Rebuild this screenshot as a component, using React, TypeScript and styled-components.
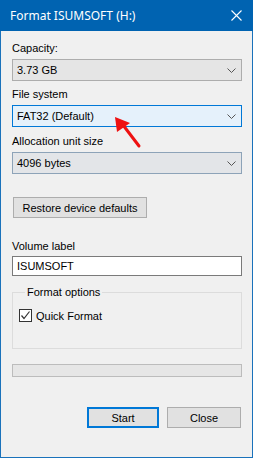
import styled, { createGlobalStyle } from 'styled-components';

const GlobalStyle = createGlobalStyle`
  html, body {
    margin: 0;
    padding: 0;
    background: #f0f0f0;
  }
  * {
    box-sizing: border-box;
  }
`;

const Window = styled.div`
  position: relative;
  width: 253px;
  height: 458px;
  border: 1px solid #1a72bb;
  border-top: none;
  background: #f0f0f0;
  font-family: 'Liberation Sans', Arial, sans-serif;
  font-size: 11px;
  color: #000;
  display: flex;
  flex-direction: column;
`;

const TitleBar = styled.div`
  height: 31px;
  margin: 0 -1px;
  background: #0063b1;
  color: #fff;
  display: flex;
  align-items: center;
  justify-content: space-between;
  padding: 0 11px 1px 10px;
  font-family: 'Noto Sans', 'Open Sans', sans-serif;
  font-size: 12px;
`;

const Body = styled.div`
  flex: 1;
  display: flex;
  flex-direction: column;
  padding: 11px 10px 0 11px;
`;

const Label = styled.div<{ $gap?: number }>`
  line-height: 13px;
  height: 13px;
  margin-top: ${({ $gap }) => $gap ?? 0}px;
  margin-bottom: 4px;
  white-space: nowrap;
`;

const Combo = styled.div<{ $focused?: boolean; $hover?: boolean }>`
  height: 22px;
  display: flex;
  align-items: center;
  justify-content: space-between;
  padding: 0 5px 0 4px;
  border: 1px solid
    ${({ $focused, $hover }) => ($focused ? '#0078d7' : $hover ? '#8da3b8' : '#adadad')};
  background: ${({ $focused, $hover }) => ($focused ? '#e5f1fb' : $hover ? '#e3e5e8' : '#e5e5e5')};
`;

const Chevron = () => (
  <svg width="9" height="5" viewBox="0 0 9 5">
    <polyline points="0.5,0.5 4.5,4.5 8.5,0.5" fill="none" stroke="#555" strokeWidth="1" />
  </svg>
);

const Button = styled.div<{ $primary?: boolean; $width: number }>`
  width: ${({ $width }) => $width}px;
  height: 21px;
  display: flex;
  align-items: center;
  justify-content: center;
  background: #e1e1e1;
  border: ${({ $primary }) => ($primary ? '2px solid #0078d7' : '1px solid #adadad')};
  white-space: nowrap;
`;

const RestoreRow = styled.div`
  margin-top: 23px;
  display: flex;
  padding-left: 1px;
`;

const TextInput = styled.div`
  height: 20px;
  display: flex;
  align-items: center;
  padding-left: 4px;
  margin-top: -1px;
  background: #fff;
  border: 1px solid #7a7a7a;
`;

const Group = styled.fieldset`
  margin: 10px 0 0;
  height: 63px;
  border: 1px solid #dcdcdc;
  padding: 8px 0 0 6px;
  min-width: 0;
`;

const Legend = styled.legend`
  margin-left: 6px;
  padding: 0 2px;
  line-height: 13px;
`;

const CheckRow = styled.div`
  display: flex;
  align-items: center;
  gap: 4px;
  margin-top: 2px;
`;

const CheckBox = styled.div`
  width: 13px;
  height: 13px;
  border: 1px solid #333;
  background: #fff;
  display: flex;
  align-items: center;
  justify-content: center;
`;

const Progress = styled.div`
  margin-top: 15px;
  height: 13px;
  border: 1px solid #bcbcbc;
  background: #e6e6e6;
`;

const ButtonRow = styled.div`
  margin-top: 30px;
  display: flex;
  justify-content: flex-end;
  gap: 8px;
  padding-right: 1px;
`;

const Pointer = styled.svg`
  position: absolute;
  left: 105px;
  top: 110px;
`;

export default function App() {
  return (
    <>
      <GlobalStyle />
      <Window>
        <TitleBar>
          <span>Format ISUMSOFT (H:)</span>
          <svg width="11" height="11" viewBox="0 0 11 11">
            <path d="M0.5 0.5 L10.5 10.5 M10.5 0.5 L0.5 10.5" stroke="#fff" strokeWidth="1.1" />
          </svg>
        </TitleBar>
        <Body>
          <Label>Capacity:</Label>
          <Combo>
            <span>3.73 GB</span>
            <Chevron />
          </Combo>
          <Label $gap={7}>File system</Label>
          <Combo $focused>
            <span>FAT32 (Default)</span>
            <Chevron />
          </Combo>
          <Label $gap={8}>Allocation unit size</Label>
          <Combo $hover>
            <span>4096 bytes</span>
            <Chevron />
          </Combo>
          <RestoreRow>
            <Button $width={134}>Restore device defaults</Button>
          </RestoreRow>
          <Label $gap={22}>Volume label</Label>
          <TextInput>ISUMSOFT</TextInput>
          <Group>
            <Legend>Format options</Legend>
            <CheckRow>
              <CheckBox>
                <svg width="11" height="11" viewBox="0 0 11 11">
                  <polyline points="1.5,5.5 4,8.5 9.5,1.5" fill="none" stroke="#333" strokeWidth="1.2" />
                </svg>
              </CheckBox>
              <span>Quick Format</span>
            </CheckRow>
          </Group>
          <Progress />
          <ButtonRow>
            <Button $primary $width={72}>Start</Button>
            <Button $width={74}>Close</Button>
          </ButtonRow>
        </Body>
        <Pointer width="40" height="42" viewBox="0 0 40 42">
          <line x1="33" y1="36" x2="17" y2="15" stroke="#ee1111" strokeWidth="3" strokeLinecap="round" />
          <polygon points="9,7 11,22 24,13" fill="#ee1111" />
        </Pointer>
      </Window>
    </>
  );
}
